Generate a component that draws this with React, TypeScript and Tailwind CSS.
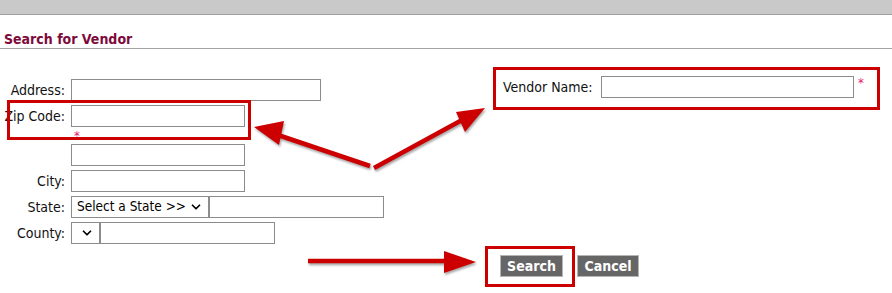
import { ChevronDown } from 'lucide-react';

function TextBox({ w }: { w: string }) {
  return <input type="text" className={`h-[22px] ${w} border border-[#8c8c8c] bg-white outline-none`} />;
}

function Select({ w, label }: { w: string; label: string }) {
  return (
    <div className={`relative h-[22px] ${w} border border-[#8c8c8c] bg-white flex items-center pl-[5px]`}>
      <span className="text-[13.5px] text-black leading-none whitespace-nowrap">{label}</span>
      <ChevronDown size={14} strokeWidth={3} className="absolute right-[5px] top-[3px] text-black" />
    </div>
  );
}

function Row({ label, children, className = '' }: { label: string; children: React.ReactNode; className?: string }) {
  return (
    <div className={`flex items-center ${className}`}>
      <label className="w-[66px] pr-[1px] text-right text-[14px] text-[#111] whitespace-nowrap">{label}</label>
      <div className="ml-[5px] flex">{children}</div>
    </div>
  );
}

export default function App() {
  return (
    <div className="relative w-[892px] h-[293px] bg-white overflow-hidden font-['DejaVu_Sans_Condensed','DejaVu_Sans',sans-serif]">
      {/* top strip */}
      <div className="h-[15px] bg-[#c9c9c9] border-b border-[#9f9f9f]" />

      {/* header */}
      <div className="h-[34px] border-b border-[#a3a3a3] flex items-end pl-[4px]">
        <h1 className="text-[14px] font-bold text-[#7d0a3a] leading-[18px]">Search for Vendor</h1>
      </div>

      <div className="flex">
        {/* left column */}
        <div className="w-[492px] pt-[30px] flex flex-col">
          <Row label="Address:">
            <TextBox w="w-[250px]" />
          </Row>
          <Row label="Zip Code:" className="mt-[4px]">
            <TextBox w="w-[174px]" />
          </Row>
          <div className="h-[17px] pl-[74px] text-[#e8175d] text-[13px] leading-[17px]">*</div>
          <Row label="">
            <TextBox w="w-[174px]" />
          </Row>
          <Row label="City:" className="mt-[4px]">
            <TextBox w="w-[174px]" />
          </Row>
          <Row label="State:" className="mt-[4px]">
            <Select w="w-[138px]" label="Select a State >>" />
            <TextBox w="w-[175px]" />
          </Row>
          <Row label="County:" className="mt-[4px]">
            <Select w="w-[29px]" label="" />
            <TextBox w="w-[175px]" />
          </Row>
        </div>

        {/* right column */}
        <div className="pt-[27px] pl-[11px]">
          <div className="flex items-center">
            <label className="w-[98px] text-[14px] text-[#111]">Vendor Name:</label>
            <TextBox w="w-[253px]" />
            <span className="ml-[4px] -mt-[8px] text-[#e8175d] text-[13px]">*</span>
          </div>
        </div>
      </div>

      {/* buttons */}
      <div className="flex gap-[14px] pl-[500px] mt-[11px]">
        <button className="h-[22px] w-[63px] bg-[#666666] border border-[#b5b5b5] text-white text-[14px] font-bold">Search</button>
        <button className="h-[22px] w-[62px] bg-[#666666] border border-[#b5b5b5] text-white text-[14px] font-bold">Cancel</button>
      </div>

      {/* annotation boxes */}
      <div className="absolute left-[7px] top-[100px] w-[244px] h-[40px] border-[3px] border-[#cc0000]" />
      <div className="absolute left-[493px] top-[67px] w-[387px] h-[43px] border-[3px] border-[#cc0000]" />
      <div className="absolute left-[485px] top-[246px] w-[90px] h-[41px] border-[3px] border-[#cc0000]" />

      {/* annotation arrows */}
      <svg className="absolute left-0 top-0 pointer-events-none drop-shadow-[1px_2px_1px_rgba(0,0,0,0.35)]" width="892" height="293">
        <g fill="#cc0000" stroke="#cc0000">
          <line x1="370" y1="166" x2="275" y2="134" strokeWidth="4.5" />
          <polygon points="254,127 284,121 279,145" stroke="none" />
          <line x1="374" y1="168" x2="462" y2="120" strokeWidth="4.5" />
          <polygon points="485,108 456,112 465,132" stroke="none" />
          <line x1="308" y1="261" x2="448" y2="261" strokeWidth="4.5" />
          <polygon points="476,262 444,251 444,273" stroke="none" />
        </g>
      </svg>
    </div>
  );
}
